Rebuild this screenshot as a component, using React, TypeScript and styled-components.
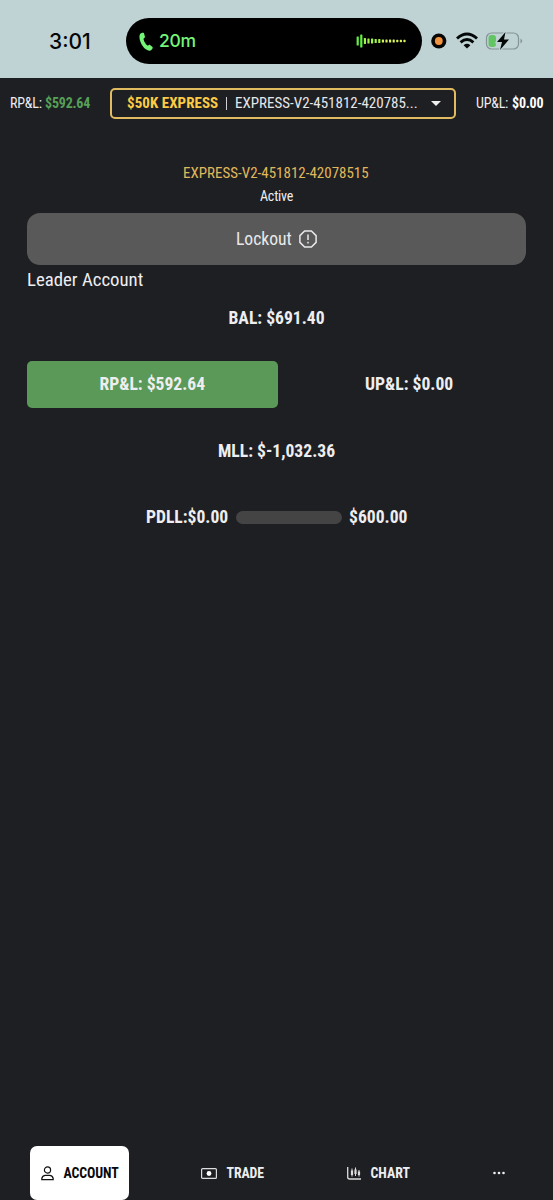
import React from "react";
import styled, { createGlobalStyle } from "styled-components";

const GlobalStyle = createGlobalStyle`
  * { box-sizing: border-box; }
  body { margin: 0; background: #1e1f23; font-family: "Roboto Condensed", Roboto, sans-serif; font-stretch: 75%; color: #eeeef0; }
`;

const Screen = styled.div`
  display: flex;
  flex-direction: column;
  width: 553px;
  height: 1200px;
  overflow: hidden;
  background: #1e1f23;
`;

const StatusBar = styled.header`
  display: flex;
  align-items: center;
  height: 78px;
  padding: 4px 30px 0 49px;
  background: #bfd2d4;
  font-family: Inter, sans-serif;
  font-stretch: normal;
`;

const Clock = styled.div`
  width: 77px;
  color: #050808;
  font-size: 21px;
  font-weight: 500;
`;

const Island = styled.div`
  display: flex;
  align-items: center;
  width: 296px;
  height: 46px;
  padding: 0 16px 0 13px;
  border-radius: 23px;
  background: #000;
  color: #74f577;
`;

const CallTime = styled.span`
  flex: 1;
  margin: -1px 0 0 6px;
  font-size: 17.5px;
  font-weight: 500;
  letter-spacing: -0.3px;
`;

const StatusIcons = styled.div`
  display: flex;
  align-items: center;
  margin-left: 9px;
`;

const Summary = styled.div`
  display: flex;
  align-items: center;
  height: 50px;
  padding: 0 10px;
`;

const Fit = styled.span<{ $w: number; $size: number; $bold?: boolean; $color?: string; $track?: number }>`
  flex: none;
  width: ${(p) => p.$w}px;
  text-align: left;
  white-space: nowrap;
  font-size: ${(p) => p.$size}px;
  font-weight: ${(p) => (p.$bold ? 700 : 400)};
  letter-spacing: ${(p) => p.$track ?? 0}px;
  color: ${(p) => p.$color ?? "inherit"};
`;

const AccountSelect = styled.button`
  display: flex;
  align-items: center;
  width: 346px;
  height: 31px;
  margin: 0 20px;
  padding: 0 13px 0 15px;
  border: 2.5px solid #e0bb60;
  border-radius: 5px;
  background: transparent;
  color: #e7e7e9;
  font: inherit;
`;

const Divider = styled.i`
  width: 1px;
  height: 13px;
  margin: 0 8px 0 8px;
  background: #d0d0d3;
`;

const Body = styled.main`
  display: flex;
  flex: 1;
  flex-direction: column;
  padding: 33px 27px 0;
`;

const Line = styled.div<{ $h: number; $left?: boolean; $gap?: number; $lift?: number }>`
  display: flex;
  align-items: center;
  justify-content: ${(p) => (p.$left ? "flex-start" : "center")};
  gap: ${(p) => p.$gap ?? 0}px;
  height: ${(p) => p.$h}px;
  padding-bottom: ${(p) => p.$lift ?? 0}px;
`;

const Lockout = styled.button`
  display: flex;
  align-items: center;
  justify-content: center;
  gap: 8px;
  width: 499px;
  height: 52px;
  border: 0;
  border-radius: 13px;
  background: #595959;
  color: #e9e9eb;
  font: inherit;
  padding: 0 0 1px;
`;

const Stats = styled.section`
  display: flex;
  flex-direction: column;
  gap: 20px;
`;

const Split = styled.div`
  display: grid;
  grid-template-columns: 251px 1fr;
  column-gap: 14px;
`;

const Stat = styled.div<{ $positive?: boolean }>`
  display: flex;
  align-items: center;
  justify-content: center;
  height: 46.5px;
  border-radius: 5px;
  background: ${(p) => (p.$positive ? "#5a9957" : "transparent")};
`;

const Meter = styled.div`
  width: 106px;
  height: 13px;
  border-radius: 7px;
  background: #444445;
`;

const Nav = styled.nav`
  display: flex;
  height: 54px;
  padding-left: 30px;
`;

const Tab = styled.a<{ $active?: boolean; $w: number; $pad: number; $gap: number }>`
  display: flex;
  align-items: center;
  flex: none;
  gap: ${(p) => p.$gap}px;
  width: ${(p) => p.$w}px;
  padding-left: ${(p) => p.$pad}px;
  border-radius: 7px;
  background: ${(p) => (p.$active ? "#fff" : "transparent")};
  color: ${(p) => (p.$active ? "#08080a" : "#eeeef0")};
`;

const WAVE = [9, 13, 6, 5, 5, 4, 4, 3, 3, 3, 3, 2.4, 2.4, 2.4];

export default function App() {
  return (
    <Screen>
      <GlobalStyle />
      <StatusBar>
        <Clock>3:01</Clock>
        <Island>
          <svg width="14" height="19" viewBox="0 0 14 19" fill="#74f577">
            <path d="M1 2.2C1.800.8 4.300.2 5 1.200L6 4.900C6.200 5.700 4.500 6.400 4.500 7.100C5 9.700 6.400 12 8.400 13.500C9.200 13.900 10.200 12.500 11 12.900L13.500 15.100C14.200 16.200 12.500 18.300 11 18.700C5.500 19.600-1.600 8 1 2.200Z" />
          </svg>
          <CallTime>20m</CallTime>
          <svg width="50" height="14" viewBox="0 0 50 14">
            {WAVE.map((h, i) => (
              <rect key={i} x={0.6 + i * 3.6} y={7 - h / 2} width="2.2" height={h} rx=".6" fill={i < 2 ? "#61f044" : i < 7 ? "#a2f54b" : "#d9f45a"} />
            ))}
          </svg>
        </Island>
        <StatusIcons>
          <svg width="92" height="20" viewBox="0 0 92 20">
            <circle cx="7.800" cy="10" r="7.600" fill="#080706" />
            <circle cx="7.800" cy="10" r="3.900" fill="#f2943d" />
            <g fill="none" stroke="#050808" strokeWidth="2.900">
              <path d="M26 7.500Q36 -1.700 46 7.500" />
              <path d="M29.600 11.300Q36 5.600 42.400 11.300" />
            </g>
            <path d="M32.600 14.200Q36 11.400 39.400 14.200L36 17.600Z" fill="#050808" />
            <rect x="55.500" y="2" width="32" height="16" rx="5" fill="none" stroke="#849395" strokeWidth="1.200" />
            <rect x="57.500" y="4" width="7.500" height="12" rx="3" fill="#62c463" />
            <path d="M89.500 7.600Q93 10 89.500 12.400Z" fill="#849395" />
            <path d="M74.500 1L66 11H71L69 19L78 8.500H73Z" fill="#050808" stroke="#bfd2d4" strokeWidth="2.400" paintOrder="stroke" />
          </svg>
        </StatusIcons>
      </StatusBar>
      <Summary>
        <Fit $w={35} $size={14} $track={-0.2}>RP&amp;L:</Fit>
        <Fit $w={45} $size={14} $track={-0.2} $bold $color="#56a057">$592.64</Fit>
        <AccountSelect>
          <Fit $w={91} $size={15} $track={0.05} $bold $color="#fccb45">$50K EXPRESS</Fit>
          <Divider />
          <Fit $w={196} $size={15}>EXPRESS-V2-451812-420785...</Fit>
          <svg width="10" height="5" viewBox="0 0 10 5"><path d="M0 0H10L5 5Z" fill="#eee" /></svg>
        </AccountSelect>
        <Fit $w={36} $size={14} $track={-0.2}>UP&amp;L:</Fit>
        <Fit $w={31} $size={14} $track={-0.2} $bold $color="#fff">$0.00</Fit>
      </Summary>
      <Body>
        <Line $h={24}><Fit $w={187} $size={15} $color="#e0b95b">EXPRESS-V2-451812-42078515</Fit></Line>
        <Line $h={28} $lift={6}><Fit $w={33} $size={14} $track={-0.2}>Active</Fit></Line>
        <Lockout>
          <Fit $w={55} $size={17.6}>Lockout</Fit>
          <svg width="18" height="18" viewBox="0 0 18 18" fill="none" stroke="#e9e9eb" strokeWidth="1.500">
            <path d="M5.600.9H12.400L17.100 5.600V12.400L12.400 17.100H5.600L.9 12.400V5.600Z" />
            <path d="M9 4.500V10M9 11.700V13.500" />
          </svg>
        </Lockout>
        <Line $h={29.5} $left><Fit $w={116} $size={18.8}>Leader Account</Fit></Line>
        <Stats>
          <Stat><Fit $w={96} $size={17.6} $bold>BAL: $691.40</Fit></Stat>
          <Split>
            <Stat $positive><Fit $w={106} $size={17.6} $bold>RP&amp;L: $592.64</Fit></Stat>
            <Stat><Fit $w={88} $size={17.6} $bold>UP&amp;L: $0.00</Fit></Stat>
          </Split>
          <Stat><Fit $w={117} $size={17.6} $bold>MLL: $-1,032.36</Fit></Stat>
          <Line $h={46} $gap={7.5}>
            <Fit $w={82} $size={17.6} $bold>PDLL:$0.00</Fit>
            <Meter />
            <Fit $w={58} $size={17.6} $bold>$600.00</Fit>
          </Line>
        </Stats>
      </Body>
      <Nav>
        <Tab $active $w={99} $pad={11} $gap={9.5}>
          <svg width="13" height="15" viewBox="0 0 13 15" fill="none" stroke="#111" strokeWidth="1.200">
            <circle cx="6.500" cy="4" r="3.100" />
            <path d="M.8 13.600V12.500Q1.500 9.300 4.300 9.300H8.700Q11.500 9.300 12.200 12.500V13.600Z" />
          </svg>
          <Fit $w={55} $size={13.8} $track={-0.1} $bold>ACCOUNT</Fit>
        </Tab>
        <Tab $w={180} $pad={72} $gap={9.5}>
          <svg width="16" height="11" viewBox="0 0 16 11">
            <rect x=".6" y=".6" width="14.800" height="9.800" rx="1" fill="none" stroke="#ddd" strokeWidth="1.200" />
            <circle cx="8" cy="5.500" r="2.400" fill="#fff" />
          </svg>
          <Fit $w={38} $size={13.8} $track={-0.1} $bold>TRADE</Fit>
        </Tab>
        <Tab $w={150} $pad={37.5} $gap={10}>
          <svg width="14" height="13" viewBox="0 0 14 13" fill="none" stroke="#ddd" strokeWidth="1">
            <path d="M.7 0V10Q.7 12 2.700 12H14" strokeWidth="1.300" />
            <path d="M5 1.500V9.500M8.500.5V9M12 3V9.500" />
            <path d="M5 3.500V8M8.500 2.500V7M12 4.500V8" strokeWidth="2.200" />
          </svg>
          <Fit $w={39} $size={13.8} $bold>CHART</Fit>
        </Tab>
        <Tab $w={60} $pad={33.5} $gap={0}>
          <svg width="12" height="4" viewBox="0 0 12 4" fill="#eee"><circle cx="1.500" cy="2" r="1.300" /><circle cx="6" cy="2" r="1.300" /><circle cx="10.500" cy="2" r="1.300" /></svg>
        </Tab>
      </Nav>
    </Screen>
  );
}
